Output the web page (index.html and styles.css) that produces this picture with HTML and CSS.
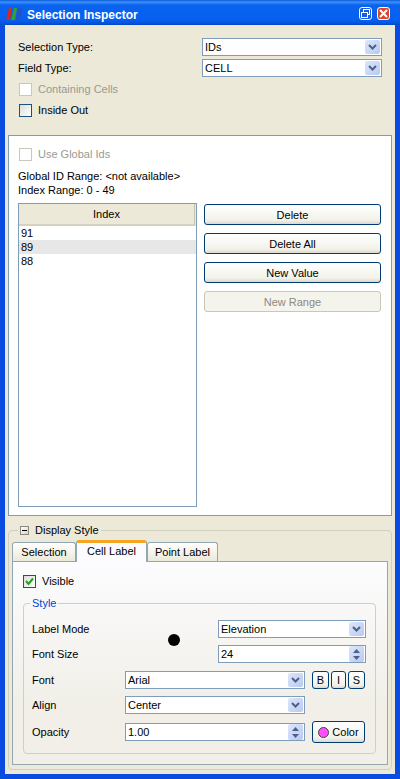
FILE: index.html
```html
<!DOCTYPE html>
<html lang="en">
<head>
    <meta charset="UTF-8">
    <title>Selection Inspector</title>
    <link rel="stylesheet" href="styles.css">
</head>
<body>
    <div class="window">
        <header class="titlebar">
            <svg class="app-icon" width="17" height="12" viewBox="0 0 17 12">
                <path d="M0 12 L3 0 H6 L4 12 Z" fill="#d8281c"/>
                <path d="M5 12 L8 0 H11 L9 12 Z" fill="#2fa32c"/>
                <path d="M10 12 L13 0 H16 L14 12 Z" fill="#2a4fc4"/>
            </svg>
            <span class="title">Selection Inspector</span>
            <div class="title-buttons">
                <div class="tbtn tbtn-restore">
                    <svg width="11" height="11" viewBox="0 0 11 11" fill="none" stroke="#fff" stroke-width="1">
                        <rect x="3.5" y="1.5" width="6" height="5"/>
                        <rect x="1.5" y="4.5" width="6" height="5" fill="#1a5ce0"/>
                    </svg>
                </div>
                <div class="tbtn tbtn-close">
                    <svg width="11" height="11" viewBox="0 0 11 11" stroke="#fff" stroke-width="2">
                        <path d="M2 2 L9 9 M9 2 L2 9"/>
                    </svg>
                </div>
            </div>
        </header>

        <div class="client">
            <section class="top">
                <div class="type-row">
                    <label>Selection Type:</label>
                    <div class="combo type-combo"><span>IDs</span><i class="arrow"><svg width="9" height="6" viewBox="0 0 9 6"><path d="M1 1 L4.5 4.500 L8 1" fill="none" stroke="#4d6185" stroke-width="2"/></svg></i></div>
                </div>
                <div class="type-row">
                    <label>Field Type:</label>
                    <div class="combo type-combo"><span>CELL</span><i class="arrow"><svg width="9" height="6" viewBox="0 0 9 6"><path d="M1 1 L4.5 4.500 L8 1" fill="none" stroke="#4d6185" stroke-width="2"/></svg></i></div>
                </div>
                <div class="check-row disabled containing"><i class="check"></i>Containing Cells</div>
                <div class="check-row inside"><i class="check"></i>Inside Out</div>
            </section>

            <section class="ids-panel">
                <div class="check-row disabled"><i class="check"></i>Use Global Ids</div>
                <p class="range range-first">Global ID Range: &lt;not available&gt;</p>
                <p class="range">Index Range: 0 - 49</p>
                <div class="ids-body">
                    <div class="table">
                        <div class="table-head">Index</div>
                        <div class="table-row">91</div>
                        <div class="table-row alt">89</div>
                        <div class="table-row">88</div>
                    </div>
                    <div class="ids-buttons">
                        <button class="btn">Delete</button>
                        <button class="btn">Delete All</button>
                        <button class="btn">New Value</button>
                        <button class="btn" disabled>New Range</button>
                    </div>
                </div>
            </section>

            <section class="display">
                <div class="display-legend">
                    <i class="toggle"></i>
                    <span>Display Style</span>
                </div>
                <div class="tabs">
                    <div class="tab tab-selection">Selection</div>
                    <div class="tab active">Cell Label</div>
                    <div class="tab tab-point">Point Label</div>
                </div>
                <div class="tab-pane">
                    <div class="check-row visible">
                        <i class="check checked">
                            <svg width="11" height="11" viewBox="0 0 11 11"><path d="M2 5 L4.500 8 L9 2.500" fill="none" stroke="#21a121" stroke-width="2"/></svg>
                        </i>Visible
                    </div>
                    <fieldset class="style-group">
                        <legend>Style</legend>
                        <div class="form-row row-mode">
                            <label>Label Mode</label>
                            <div class="combo wide"><span>Elevation</span><i class="arrow"><svg width="9" height="6" viewBox="0 0 9 6"><path d="M1 1 L4.5 4.500 L8 1" fill="none" stroke="#4d6185" stroke-width="2"/></svg></i></div>
                        </div>
                        <div class="form-row row-size">
                            <label>Font Size</label>
                            <div class="combo wide"><span>24</span><i class="arrow spin"><svg width="9" height="13" viewBox="0 0 9 13" fill="#4d6185"><path d="M4.500 1 L8 5 H1 Z M4.500 12 L8 8 H1 Z"/></svg></i></div>
                        </div>
                        <div class="form-row row-font">
                            <label>Font</label>
                            <div class="combo mid"><span>Arial</span><i class="arrow"><svg width="9" height="6" viewBox="0 0 9 6"><path d="M1 1 L4.5 4.500 L8 1" fill="none" stroke="#4d6185" stroke-width="2"/></svg></i></div>
                            <div class="bis">
                                <button class="btn mini">B</button>
                                <button class="btn mini mini-i">I</button>
                                <button class="btn mini">S</button>
                            </div>
                        </div>
                        <div class="form-row row-align">
                            <label>Align</label>
                            <div class="combo mid"><span>Center</span><i class="arrow"><svg width="9" height="6" viewBox="0 0 9 6"><path d="M1 1 L4.5 4.500 L8 1" fill="none" stroke="#4d6185" stroke-width="2"/></svg></i></div>
                        </div>
                        <div class="form-row row-opacity">
                            <label>Opacity</label>
                            <div class="combo mid"><span>1.00</span><i class="arrow spin"><svg width="9" height="13" viewBox="0 0 9 13" fill="#4d6185"><path d="M4.500 1 L8 5 H1 Z M4.500 12 L8 8 H1 Z"/></svg></i></div>
                            <button class="btn color-btn"><i class="swatch"></i>Color</button>
                        </div>
                        <i class="dot"></i>
                    </fieldset>
                </div>
            </section>
        </div>
    </div>
</body>
</html>
```

FILE: styles.css
```css
* {
    margin: 0;
    padding: 0;
    box-sizing: border-box;
}
html, body {
    width: 400px;
    height: 779px;
    overflow: hidden;
}
body {
    font-family: 'Liberation Sans', Arial, sans-serif;
    font-size: 11px;
    line-height: 14px;
    color: #000;
    background-color: #0a4be0;
}
.window {
    height: 779px;
    display: flex;
    flex-direction: column;
    background-color: #0a4be0;
}
.titlebar {
    height: 25px;
    flex: none;
    display: flex;
    align-items: center;
    padding: 4px 10px 0 6px;
    background: linear-gradient(180deg, #0a58dc 0, #3d93fb 2px, #0a63ee 5px, #0560f0 20px, #0450d8 24px, #0342c0 25px);
}
.app-icon {
    margin-right: 4px;
    margin-top: -2px;
}
.title {
    color: #fff;
    font-size: 12px;
    font-weight: 700;
    flex: 1;
}
.title-buttons {
    display: flex;
    gap: 5px;
    margin-top: -3px;
}
.tbtn {
    width: 13px;
    height: 13px;
    border: 1px solid #fff;
    border-radius: 3px;
    display: flex;
    align-items: center;
    justify-content: center;
}
.tbtn-restore {
    background-color: #1a5ce0;
}
.tbtn-close {
    background-color: #d8492a;
}
.client {
    flex: 1;
    margin: 0 5px 5px;
    display: flex;
    flex-direction: column;
    background-color: #ece9d8;
}
.top {
    height: 110px;
    padding: 13px 13px 0;
}
.type-row {
    display: flex;
    justify-content: space-between;
    align-items: center;
    margin-bottom: 3px;
}
.combo {
    background-color: #fff;
    border: 1px solid #7f9db9;
    height: 18px;
    display: flex;
    align-items: center;
    justify-content: space-between;
    padding: 0 1px 0 2px;
}
.type-combo {
    width: 180px;
}
.arrow {
    width: 15px;
    height: 14px;
    background: linear-gradient(135deg, #dde6fb, #b8c9f2);
    border-radius: 2px;
    display: flex;
    align-items: center;
    justify-content: center;
}
.arrow.spin {
    height: 16px;
}
.check-row {
    display: flex;
    align-items: center;
    gap: 6px;
}
.check-row.disabled {
    color: #9a9a90;
}
.check {
    width: 13px;
    height: 13px;
    border: 1px solid #1c5180;
    background: linear-gradient(135deg, #dcdcd7, #fff);
    display: flex;
    align-items: center;
    justify-content: center;
}
.disabled .check {
    border-color: #cac8bb;
    background: #fff;
}
.containing {
    margin: 5px 0 0 1px;
}
.inside {
    margin: 7px 0 0 1px;
}
.ids-panel {
    height: 381px;
    margin: 0 3px;
    padding: 11px 9px 9px;
    background-color: #fff;
    border: 1px solid #7f9db9;
}
.ids-panel .check-row {
    margin-left: 1px;
}
.range-first {
    margin-top: 8px;
}
.ids-body {
    display: flex;
    gap: 7px;
    margin-top: 6px;
}
.table {
    width: 179px;
    height: 304px;
    border: 1px solid #7f9db9;
}
.table-head {
    height: 22px;
    line-height: 20px;
    text-align: center;
    background-color: #ece9d8;
    border-bottom: 2px solid #d6d2c2;
    border-right: 1px solid #c8c4b4;
    margin-right: 1px;
    box-shadow: 1px 0 0 #ece9d8;
}
.table-row {
    height: 14px;
    padding-left: 2px;
}
.table-row.alt {
    background-color: #e7e7e7;
}
.ids-buttons {
    width: 177px;
    margin-top: 1px;
    display: flex;
    flex-direction: column;
    gap: 8px;
}
.btn {
    height: 21px;
    font: inherit;
    border: 1px solid #003c74;
    border-radius: 3px;
    background: linear-gradient(180deg, #fff, #f2f2ea 80%, #dcd8cc);
}
.btn:disabled {
    color: #8a8a80;
    border-color: #c9c7ba;
    background: #f4f3ec;
}
.display {
    flex: 1;
    position: relative;
    margin: 14px 3px 4px;
    border: 1px solid #d0d0bf;
    border-radius: 4px;
    padding: 9px 3px 4px;
    display: flex;
    flex-direction: column;
}
.display-legend {
    position: absolute;
    top: -8px;
    left: 9px;
    display: flex;
    align-items: center;
    gap: 6px;
    padding: 0 2px;
    background-color: #ece9d8;
}
.toggle {
    width: 9px;
    height: 9px;
    position: relative;
    border: 1px solid #8a8a80;
    background: linear-gradient(135deg, #fff, #d8d4c4);
}
.toggle::after {
    content: "";
    position: absolute;
    left: 1px;
    top: 3px;
    width: 5px;
    height: 1px;
    background-color: #000;
}
.tabs {
    display: flex;
    align-items: flex-end;
    height: 21px;
    position: relative;
    z-index: 1;
}
.tab {
    height: 19px;
    text-align: center;
    line-height: 18px;
    border: 1px solid #91a7b4;
    border-bottom: 0;
    border-radius: 3px 3px 0 0;
    background: linear-gradient(180deg, #fff, #ece9d8);
}
.tab-selection {
    width: 64px;
}
.tab-point {
    width: 71px;
}
.tab.active {
    width: 71px;
    height: 22px;
    background: #fcfcfe;
    border-top: 3px solid #f5a623;
    line-height: 16px;
    margin-bottom: -1px;
}
.tab-pane {
    flex: 1;
    border: 1px solid #91a7b4;
    padding: 12px 11px 7px 10px;
    background: linear-gradient(180deg, #fcfcfe, #f1efe8 70%);
}
.style-group {
    position: relative;
    height: 158px;
    margin-top: 8px;
    border: 1px solid #d0d0bf;
    border-radius: 4px;
    padding: 0 9px 0 8px;
}
.style-group legend {
    color: #0046d5;
    margin-left: -2px;
    padding: 0 2px;
}
.form-row {
    display: flex;
    align-items: center;
    height: 18px;
}
.form-row label {
    width: 93px;
    flex: none;
}
.wide {
    width: 148px;
    margin-left: auto;
}
.mid {
    width: 180px;
}
.row-mode {
    margin-top: 10px;
}
.row-size {
    margin-top: 7px;
}
.row-font {
    margin-top: 8px;
}
.row-align {
    margin-top: 7px;
}
.row-opacity {
    margin-top: 9px;
}
.bis {
    display: flex;
    gap: 2px;
    margin-left: 7px;
}
.mini {
    width: 17px;
    height: 18px;
}
.mini-i {
    width: 15px;
}
.color-btn {
    width: 53px;
    height: 22px;
    flex: none;
    margin-left: 7px;
    display: flex;
    align-items: center;
    justify-content: center;
    gap: 3px;
}
.swatch {
    width: 11px;
    height: 11px;
    border-radius: 50%;
    background-color: #ff4dff;
    border: 1px solid #444;
}
.dot {
    position: absolute;
    left: 144px;
    top: 24px;
    width: 12px;
    height: 12px;
    border-radius: 50%;
    background-color: #000;
}
```
